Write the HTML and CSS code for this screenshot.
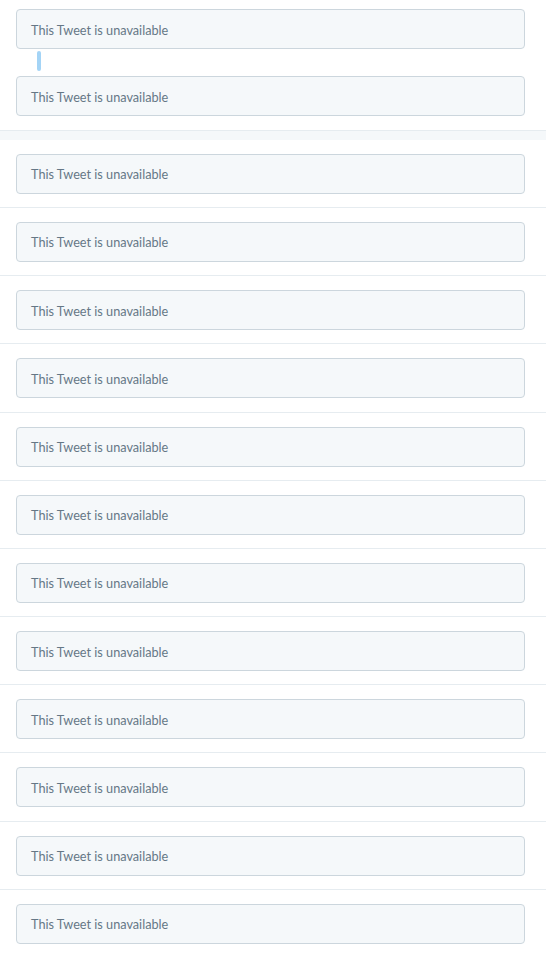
FILE: index.html
```html
<!DOCTYPE html>
<html>
<head>
<meta charset="utf-8">
<link rel="stylesheet" href="styles.css">
</head>
<body>
<div class="timeline">
  <section class="thread">
    <div class="tombstone">This Tweet is unavailable</div>
    <div class="connector"><span class="line"></span></div>
    <div class="tombstone">This Tweet is unavailable</div>
  </section>
  <div class="band"></div>
  <section class="row"><div class="tombstone">This Tweet is unavailable</div></section>
  <section class="row"><div class="tombstone">This Tweet is unavailable</div></section>
  <section class="row"><div class="tombstone">This Tweet is unavailable</div></section>
  <section class="row"><div class="tombstone">This Tweet is unavailable</div></section>
  <section class="row"><div class="tombstone">This Tweet is unavailable</div></section>
  <section class="row"><div class="tombstone">This Tweet is unavailable</div></section>
  <section class="row"><div class="tombstone">This Tweet is unavailable</div></section>
  <section class="row"><div class="tombstone">This Tweet is unavailable</div></section>
  <section class="row"><div class="tombstone">This Tweet is unavailable</div></section>
  <section class="row"><div class="tombstone">This Tweet is unavailable</div></section>
  <section class="row"><div class="tombstone">This Tweet is unavailable</div></section>
  <section class="row last"><div class="tombstone">This Tweet is unavailable</div></section>
</div>
</body>
</html>
```

FILE: styles.css
```css
html, body {
  margin: 0;
  padding: 0;
  background: #ffffff;
}
body {
  font-family: Lato, "Open Sans", sans-serif;
  font-size: 12.7px;
  color: #657786;
  overflow: hidden;
}
.timeline {
  width: 546px;
}
.thread {
  padding: 9px 21px 13.75px 16px;
}
.tombstone {
  box-sizing: border-box;
  height: 40px;
  display: flex;
  align-items: center;
  padding: 1px 14px 0;
  background: #f5f8fa;
  border: 1px solid #ccd6dd;
  border-radius: 4px;
}
.connector {
  height: 27px;
  display: flex;
  padding: 2px 0 0 21px;
  box-sizing: border-box;
}
.line {
  display: block;
  width: 4px;
  height: 20px;
  border-radius: 2px;
  background: #a4d4f6;
}
.band {
  height: 9px;
  background: #f5f8fa;
  border-top: 1px solid #e6ecf0;
}
.row {
  padding: 14px 21px 13.2px 16px;
  border-bottom: 1px solid #e6ecf0;
}
.row.last {
  border-bottom: none;
}
```
